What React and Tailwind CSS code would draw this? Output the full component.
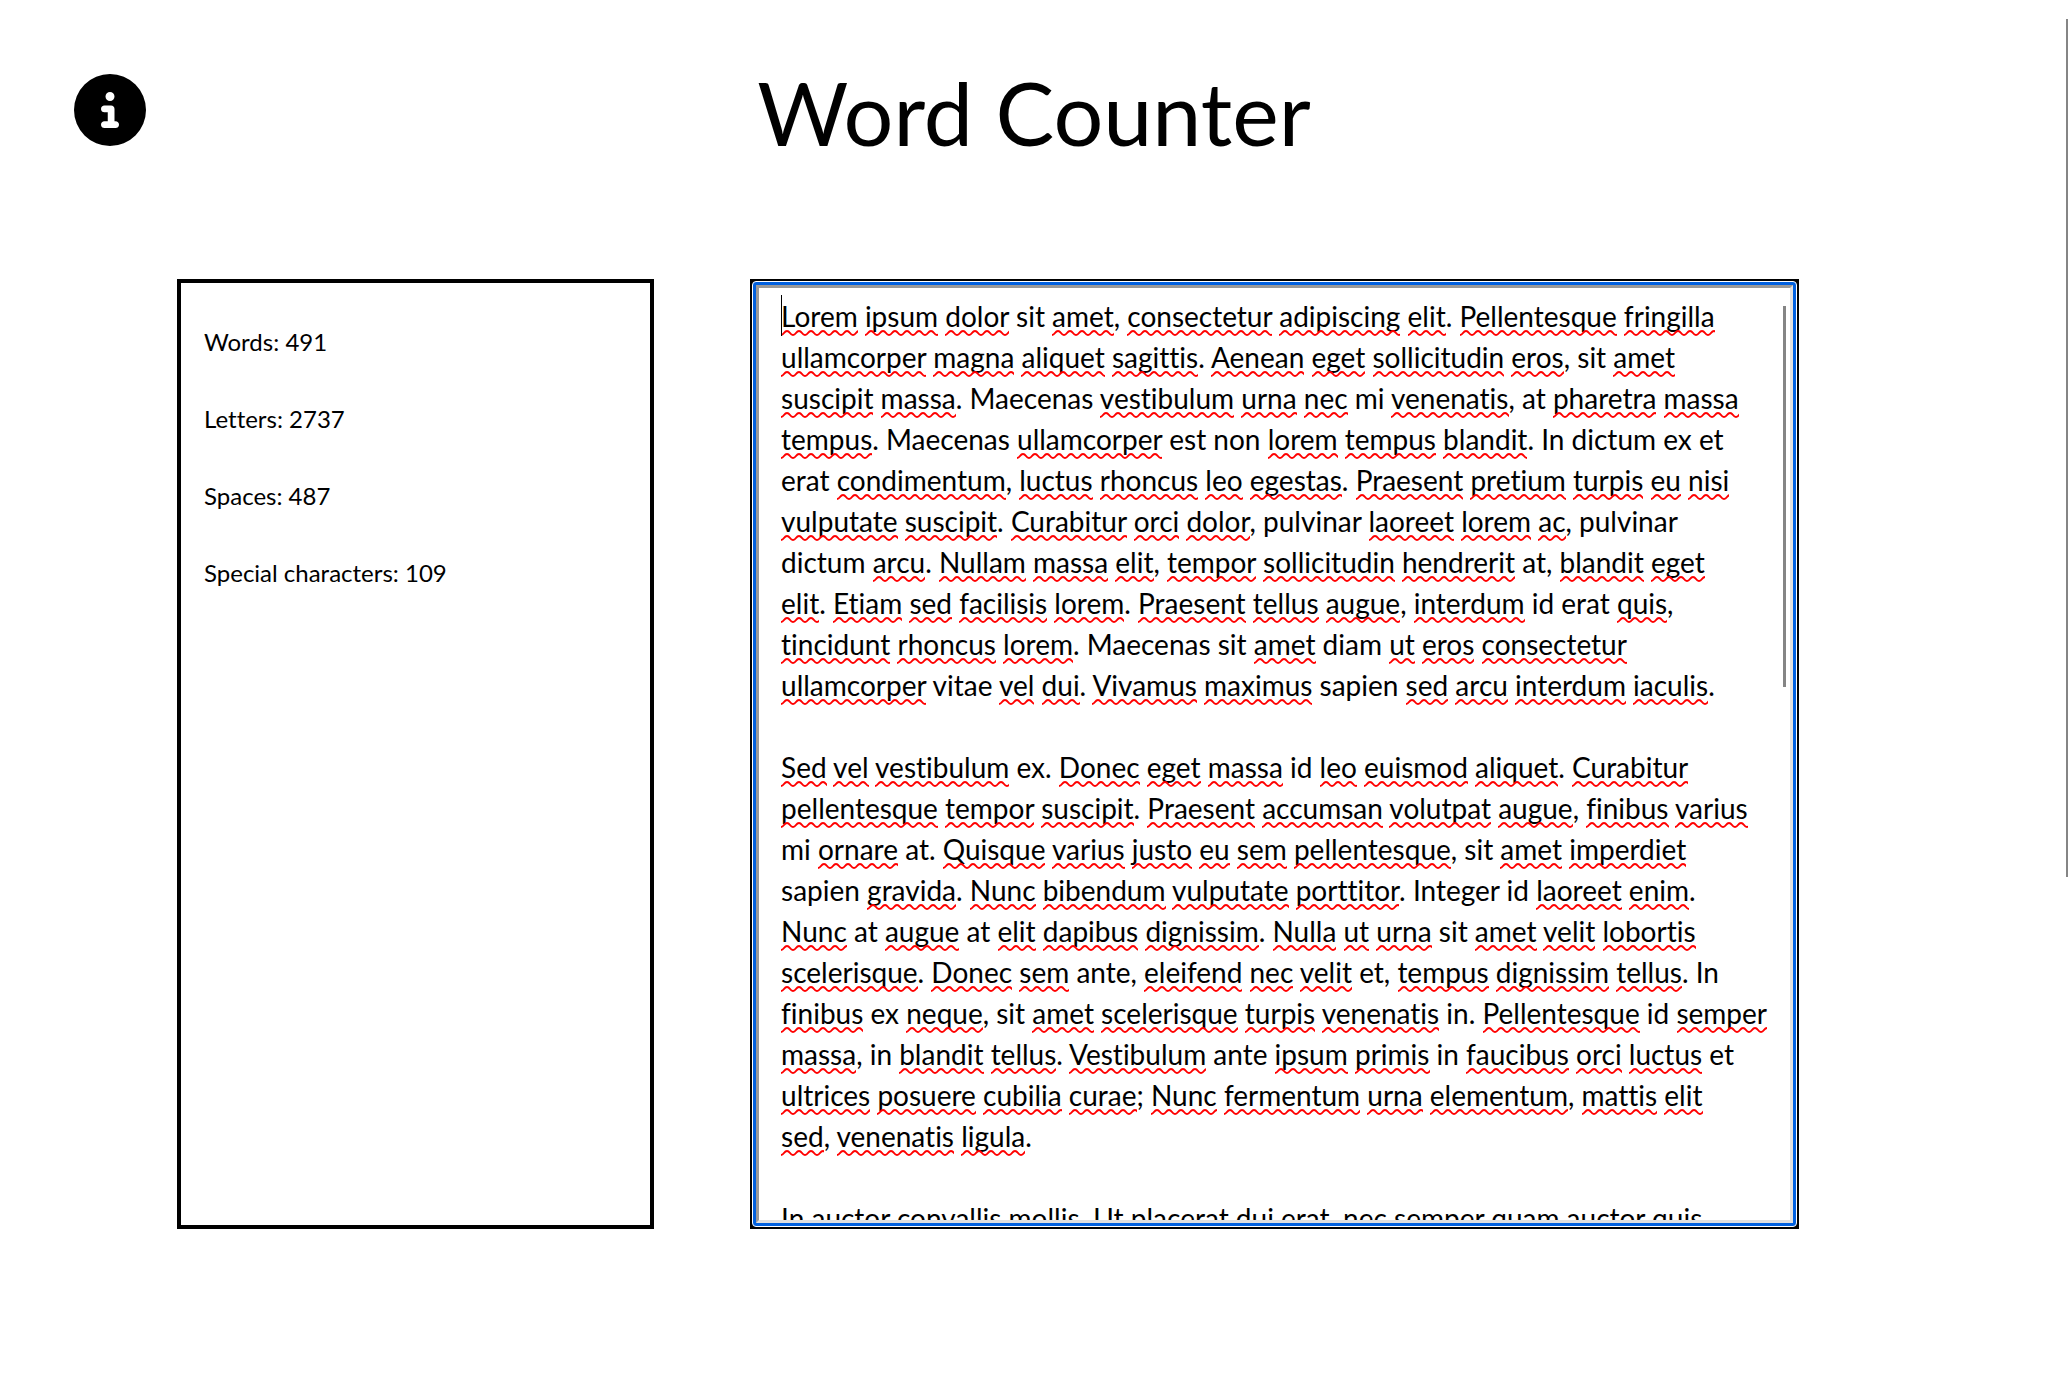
import React, { useState } from "react";
import { FaCircleInfo } from "react-icons/fa6";

const INITIAL_TEXT = `Lorem ipsum dolor sit amet, consectetur adipiscing elit. Pellentesque fringilla
ullamcorper magna aliquet sagittis. Aenean eget sollicitudin eros, sit amet
suscipit massa. Maecenas vestibulum urna nec mi venenatis, at pharetra massa
tempus. Maecenas ullamcorper est non lorem tempus blandit. In dictum ex et
erat condimentum, luctus rhoncus leo egestas. Praesent pretium turpis eu nisi
vulputate suscipit. Curabitur orci dolor, pulvinar laoreet lorem ac, pulvinar
dictum arcu. Nullam massa elit, tempor sollicitudin hendrerit at, blandit eget
elit. Etiam sed facilisis lorem. Praesent tellus augue, interdum id erat quis,
tincidunt rhoncus lorem. Maecenas sit amet diam ut eros consectetur
ullamcorper vitae vel dui. Vivamus maximus sapien sed arcu interdum iaculis.

Sed vel vestibulum ex. Donec eget massa id leo euismod aliquet. Curabitur
pellentesque tempor suscipit. Praesent accumsan volutpat augue, finibus varius
mi ornare at. Quisque varius justo eu sem pellentesque, sit amet imperdiet
sapien gravida. Nunc bibendum vulputate porttitor. Integer id laoreet enim.
Nunc at augue at elit dapibus dignissim. Nulla ut urna sit amet velit lobortis
scelerisque. Donec sem ante, eleifend nec velit et, tempus dignissim tellus. In
finibus ex neque, sit amet scelerisque turpis venenatis in. Pellentesque id semper
massa, in blandit tellus. Vestibulum ante ipsum primis in faucibus orci luctus et
ultrices posuere cubilia curae; Nunc fermentum urna elementum, mattis elit
sed, venenatis ligula.

In auctor convallis mollis. Ut placerat dui erat, nec semper quam auctor quis`;

const KNOWN_WORDS = new Set(
  "sit maecenas mi at est non in dictum ex et erat pulvinar id vitae sapien ante diam integer".split(" ")
);

const STATS = [
  ["Words", 491],
  ["Letters", 2737],
  ["Spaces", 487],
  ["Special characters", 109],
];

function SpellingMarks({ text }) {
  return text.split(/([A-Za-z]+)/).map((part, i) =>
    /^[A-Za-z]+$/.test(part) && !KNOWN_WORDS.has(part.toLowerCase()) ? (
      <span
        key={i}
        className="bg-[url(data:image/svg+xml,%3Csvg%20xmlns=%22http://www.w3.org/2000/svg%22%20width=%2212%22%20height=%226%22%3E%3Cpath%20d=%22M-6%201C-3%201-3%205%200%205S3%201%206%201%209%205%2012%205%2015%201%2018%201%22%20fill=%22none%22%20stroke=%22red%22%20stroke-width=%222%22/%3E%3C/svg%3E)] bg-bottom-left bg-repeat-x pb-[3px]"
      >
        {part}
      </span>
    ) : (
      part
    )
  );
}

export default function App() {
  const [text, setText] = useState(INITIAL_TEXT);

  return (
    <div className="relative min-h-screen bg-white font-[Lato,sans-serif] text-black [font-variant-ligatures:none]">
      <header className="grid grid-cols-[72px_1fr_72px] items-start px-[74px] pt-14">
        <button type="button" aria-label="About" className="mt-[18px] size-[72px]">
          <FaCircleInfo className="size-[72px]" />
        </button>
        <h1 className="text-center text-[88px] leading-[112px]">Word Counter</h1>
      </header>

      <main className="grid grid-cols-[477fr_1049fr] gap-24 pt-[111px] pr-[13%] pb-24 pl-[177px]">
        <section className="flex min-h-[950px] flex-col gap-[45px] border-4 border-black px-[23px] py-[43px] text-[24px] leading-[32px]">
          {STATS.map(([label, value]) => (
            <p key={label}>
              {label}: {value}
            </p>
          ))}
        </section>

        <section className="flex border-2 border-black bg-black">
          <div className="flex flex-1 rounded-[4px] border border-white bg-[#0060df] p-[3px]">
            <div className="relative flex-1 overflow-hidden border-3 border-t-[#999] border-r-[#e0e0e0] border-b-[#e0e0e0] border-l-[#999] bg-white">
              <textarea
                aria-label="Text to count"
                spellCheck={false}
                value={text}
                onChange={(e) => setText(e.target.value)}
                className="block h-full w-full resize-none overflow-x-hidden px-[22px] pt-[8px] text-[28px] leading-[41px] whitespace-pre outline-none [font-variant-ligatures:none] [scrollbar-width:none]"
              />
              <div
                aria-hidden="true"
                className="pointer-events-none absolute inset-0 overflow-hidden px-[22px] pt-[8px] text-[28px] leading-[41px] whitespace-pre text-transparent select-none"
              >
                <SpellingMarks text={text} />
              </div>
              <div className="absolute top-[7px] left-[22px] h-[41px] w-px bg-black" />
              <div className="absolute top-[18px] right-[4px] h-[381px] w-[3px] bg-[#858585]" />
            </div>
          </div>
        </section>
      </main>

      <div className="absolute top-[19px] right-0 h-[858px] w-[2px] bg-[#858585]" />
    </div>
  );
}
